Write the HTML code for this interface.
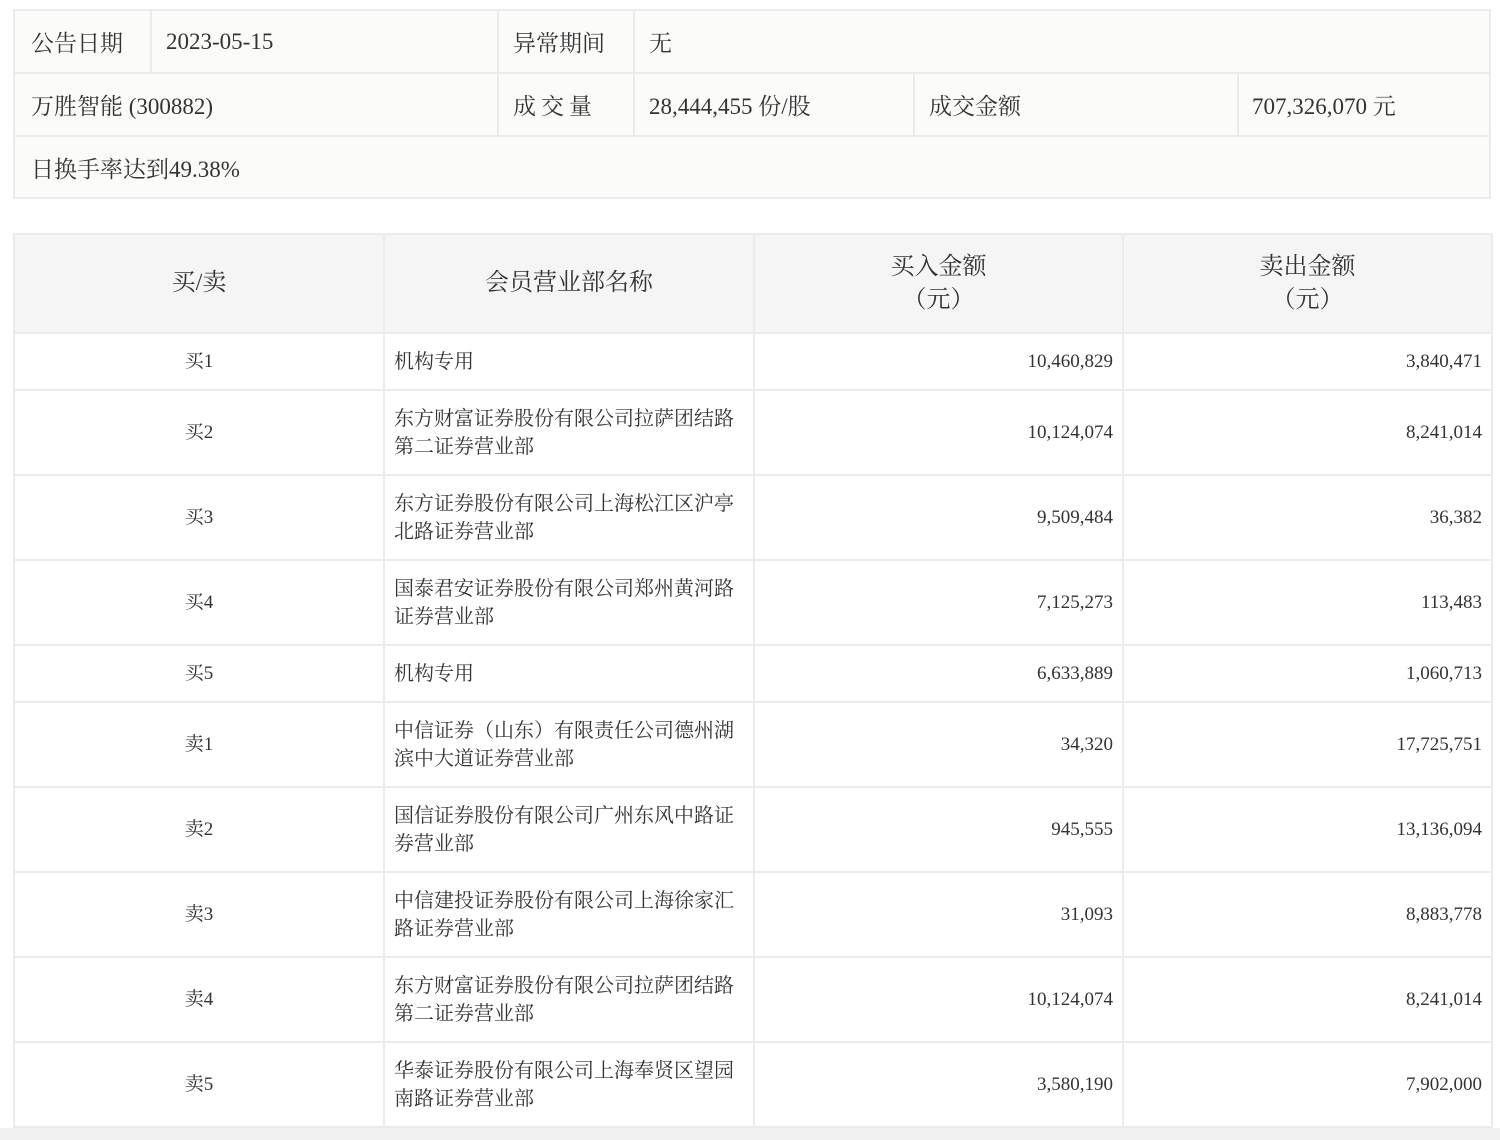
<!DOCTYPE html>
<html><head><meta charset="utf-8"><style>
*{margin:0;padding:0;box-sizing:border-box}
body{width:1500px;height:1140px;background:#fff;font-family:"Liberation Serif","Noto Serif CJK SC",serif;color:#333;position:relative;overflow:hidden}
.c{position:absolute;border:2px solid #ebebeb;background:#fbfbfa;font-size:23px;display:flex;align-items:center;padding-left:16px;white-space:nowrap}
table{position:absolute;left:13px;top:233px;width:1478px;border-collapse:collapse;table-layout:fixed}
td,th{border:2px solid #ebebeb;font-size:19px;font-weight:normal;line-height:28px}
th{background:#f5f5f5;font-size:24px;line-height:33px;height:99px;text-align:center}
td{height:85px}
td.s{height:57px}
td:nth-child(1){text-align:center}
td:nth-child(2){padding:0 8px 0 9px;font-size:20px}
td:nth-child(3),td:nth-child(4){text-align:right;padding-right:9px}
.bot{position:absolute;left:0;top:1128px;width:1500px;height:12px;background:#f1f1f1}
</style></head><body>
<div class="c" style="left:13px;top:9px;width:139px;height:65px">公告日期</div>
<div class="c" style="left:150px;top:9px;width:349px;height:65px;padding-left:14px">2023-05-15</div>
<div class="c" style="left:497px;top:9px;width:138px;height:65px;padding-left:14px">异常期间</div>
<div class="c" style="left:633px;top:9px;width:858px;height:65px;padding-left:14px">无</div>
<div class="c" style="left:13px;top:72px;width:486px;height:65px">万胜智能 (300882)</div>
<div class="c" style="left:497px;top:72px;width:138px;height:65px;padding-left:14px;letter-spacing:5px">成交量</div>
<div class="c" style="left:633px;top:72px;width:282px;height:65px;padding-left:14px">28,444,455 份/股</div>
<div class="c" style="left:913px;top:72px;width:326px;height:65px;padding-left:14px">成交金额</div>
<div class="c" style="left:1237px;top:72px;width:254px;height:65px;padding-left:13px">707,326,070 元</div>
<div class="c" style="left:13px;top:135px;width:1478px;height:64px">日换手率达到49.38%</div>
<table>
<colgroup><col style="width:370px"><col style="width:370px"><col style="width:369px"><col style="width:369px"></colgroup>
<tr><th>买/卖</th><th>会员营业部名称</th><th>买入金额<br>（元）</th><th>卖出金额<br>（元）</th></tr>
<tr><td class="s">买1</td><td class="s">机构专用</td><td class="s">10,460,829</td><td class="s">3,840,471</td></tr>
<tr><td>买2</td><td>东方财富证券股份有限公司拉萨团结路第二证券营业部</td><td>10,124,074</td><td>8,241,014</td></tr>
<tr><td>买3</td><td>东方证券股份有限公司上海松江区沪亭北路证券营业部</td><td>9,509,484</td><td>36,382</td></tr>
<tr><td>买4</td><td>国泰君安证券股份有限公司郑州黄河路证券营业部</td><td>7,125,273</td><td>113,483</td></tr>
<tr><td class="s">买5</td><td class="s">机构专用</td><td class="s">6,633,889</td><td class="s">1,060,713</td></tr>
<tr><td>卖1</td><td>中信证券（山东）有限责任公司德州湖滨中大道证券营业部</td><td>34,320</td><td>17,725,751</td></tr>
<tr><td>卖2</td><td>国信证券股份有限公司广州东风中路证券营业部</td><td>945,555</td><td>13,136,094</td></tr>
<tr><td>卖3</td><td>中信建投证券股份有限公司上海徐家汇路证券营业部</td><td>31,093</td><td>8,883,778</td></tr>
<tr><td>卖4</td><td>东方财富证券股份有限公司拉萨团结路第二证券营业部</td><td>10,124,074</td><td>8,241,014</td></tr>
<tr><td>卖5</td><td>华泰证券股份有限公司上海奉贤区望园南路证券营业部</td><td>3,580,190</td><td>7,902,000</td></tr>
</table>
<div class="bot"></div>
</body></html>
